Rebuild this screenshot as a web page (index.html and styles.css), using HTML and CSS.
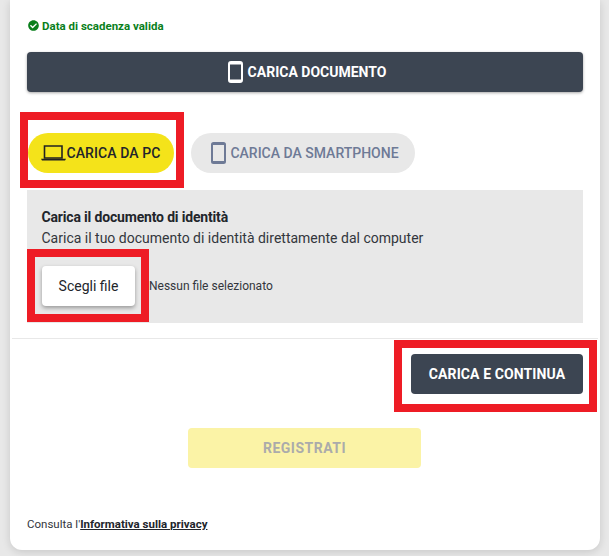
FILE: index.html
```html
<!DOCTYPE html>
<html lang="it">
<head>
<meta charset="utf-8">
<title>Carica documento</title>
<link rel="stylesheet" href="styles.css">
</head>
<body>
<main class="card">
  <div class="top">
    <p class="valid">
      <svg class="valid-icon" viewBox="0 0 512 512"><path d="M504 256c0 137-111 248-248 248S8 393 8 256 119 8 256 8s248 111 248 248zM227 387l184-184c6-6 6-16 0-22l-23-23c-6-6-16-6-22 0L216 308l-70-70c-6-6-16-6-22 0l-23 23c-6 6-6 16 0 22l104 104c6 6 16 6 22 0z"/></svg>
      <span>Data di scadenza valida</span>
    </p>
    <button class="btn-doc">
      <svg class="phone-white" viewBox="0 0 15 22"><rect x="1" y="1" width="13" height="20" rx="2" fill="none" stroke="#fff" stroke-width="2"/><rect x="1" y="1" width="13" height="2.500" fill="#fff"/><rect x="1" y="18.500" width="13" height="2.500" fill="#fff"/></svg>
      CARICA DOCUMENTO
    </button>
    <div class="tabs">
      <button class="tab tab-on">
        <svg class="laptop" viewBox="0 0 25 16"><path d="M3.500 1h17.500v12h-17.500z" fill="none" stroke="#222" stroke-width="1.600"/><path d="M0 13.800h25l-1 1.700H1z" fill="#222"/></svg>
        CARICA DA PC
      </button>
      <button class="tab tab-off">
        <svg class="phone-grey" viewBox="0 0 15 22"><rect x="1" y="1" width="13" height="20" rx="1.500" fill="none" stroke="#6e7a96" stroke-width="2"/><rect x="1" y="1" width="13" height="2" fill="#6e7a96"/><rect x="1" y="19" width="13" height="2" fill="#6e7a96"/></svg>
        CARICA DA SMARTPHONE
      </button>
    </div>
    <section class="panel">
      <h2 class="panel-title">Carica il documento di identità</h2>
      <p class="panel-text">Carica il tuo documento di identità direttamente dal computer</p>
      <div class="file-row">
        <button class="btn-file">Scegli file</button>
        <span class="file-none">Nessun file selezionato</span>
      </div>
    </section>
  </div>
  <div class="actions">
    <button class="btn-go">CARICA E CONTINUA</button>
  </div>
  <div class="register">
    <button class="btn-reg">REGISTRATI</button>
  </div>
  <p class="privacy">Consulta l'<a href="#">Informativa sulla privacy</a></p>
</main>
<div class="mark mark-pc"></div>
<div class="mark mark-file"></div>
<div class="mark mark-go"></div>
</body>
</html>
```

FILE: styles.css
```css
* { box-sizing: border-box; }
html, body { margin: 0; padding: 0; }
body {
  width: 609px;
  height: 556px;
  overflow: hidden;
  background: #e8e8e8;
  font-family: Roboto, "Liberation Sans", sans-serif;
  color: #22252b;
  position: relative;
}
button { font-family: inherit; border: 0; cursor: pointer; }
p, h2 { margin: 0; }

.card {
  width: 590px;
  height: 550px;
  margin-left: 10px;
  background: #fff;
  border-radius: 0 0 12px 12px;
  box-shadow: 0 2px 8px rgba(0,0,0,.14);
}
.top {
  width: 586px;
  height: 339px;
  margin-left: 2px;
  padding: 19px 15px 0;
  border-bottom: 1px solid #e8e8e8;
}

.valid {
  display: flex;
  align-items: center;
  gap: 3px;
  height: 13px;
  margin-left: 1px;
  font-size: 11.5px;
  font-weight: 700;
  color: #0a7f1c;
}
.valid-icon { width: 11px; height: 11px; fill: #0a7f1c; }

.btn-doc {
  display: flex;
  align-items: center;
  justify-content: center;
  gap: 5px;
  width: 556px;
  height: 40px;
  margin-top: 20px;
  padding: 0 0 0 4px;
  background: #3c4552;
  color: #fff;
  font-size: 14px;
  font-weight: 700;
  border-radius: 4px;
  box-shadow: 0 1px 3px rgba(0,0,0,.35);
}
.phone-white { width: 15px; height: 22px; }

.tabs { display: flex; gap: 17px; margin-top: 41px; margin-left: 1px; }
.tab {
  display: flex;
  align-items: center;
  height: 40px;
  border-radius: 20px;
  font-size: 14px;
  font-weight: 500;
  padding: 0;
}
.tab-on { width: 146px; justify-content: center; background: #f4e31a; color: #22252b; letter-spacing: .1px; }
.tab-off { width: 224px; justify-content: center; gap: 4px; padding-left: 4px; background: #e8e8e8; color: #6e7a96; }
.laptop { width: 25px; height: 16px; }
.phone-grey { width: 15px; height: 22px; }

.panel {
  width: 556px;
  height: 133px;
  margin-top: 17px;
  padding: 19px 15px 0 14.500px;
  background: #e8e8e8;
}
.panel-title { font-size: 14px; line-height: 16px; font-weight: 700; letter-spacing: -.17px; }
.panel-text { margin-top: 5px; font-size: 14px; line-height: 16px; color: #33363c; }
.file-row { display: flex; align-items: center; gap: 14px; margin-top: 20px; margin-left: .5px; }
.btn-file {
  width: 93px;
  height: 40px;
  background: #fff;
  color: #22252b;
  font-size: 14px;
  font-weight: 400;
  border-radius: 4px;
  box-shadow: 0 2px 4px rgba(0,0,0,.35);
}
.file-none { font-size: 12px; color: #33363c; }

.actions { display: flex; justify-content: flex-end; padding: 15px 17px 0 0; }
.btn-go {
  width: 172px;
  height: 40px;
  padding: 0;
  background: #3c4552;
  color: #fff;
  font-size: 14px;
  font-weight: 700;
  letter-spacing: .1px;
  border-radius: 4px;
}

.register { display: flex; justify-content: center; margin-top: 34px; padding-right: 1px; }
.btn-reg {
  width: 233px;
  height: 40px;
  padding: 0;
  background: #fbf3a6;
  color: #ababab;
  font-size: 14px;
  font-weight: 700;
  letter-spacing: .5px;
  border-radius: 4px;
}

.privacy { margin: 49px 0 0 17px; font-size: 11.5px; line-height: 14px; color: #33363c; }
.privacy a { color: #22252b; font-weight: 700; text-decoration: underline; }

.mark { position: absolute; border: 8px solid #ee1c25; }
.mark-pc { left: 20px; top: 112px; width: 164px; height: 76px; }
.mark-file { left: 27px; top: 249px; width: 122px; height: 73px; }
.mark-go { left: 394px; top: 340px; width: 203px; height: 72px; }
```
